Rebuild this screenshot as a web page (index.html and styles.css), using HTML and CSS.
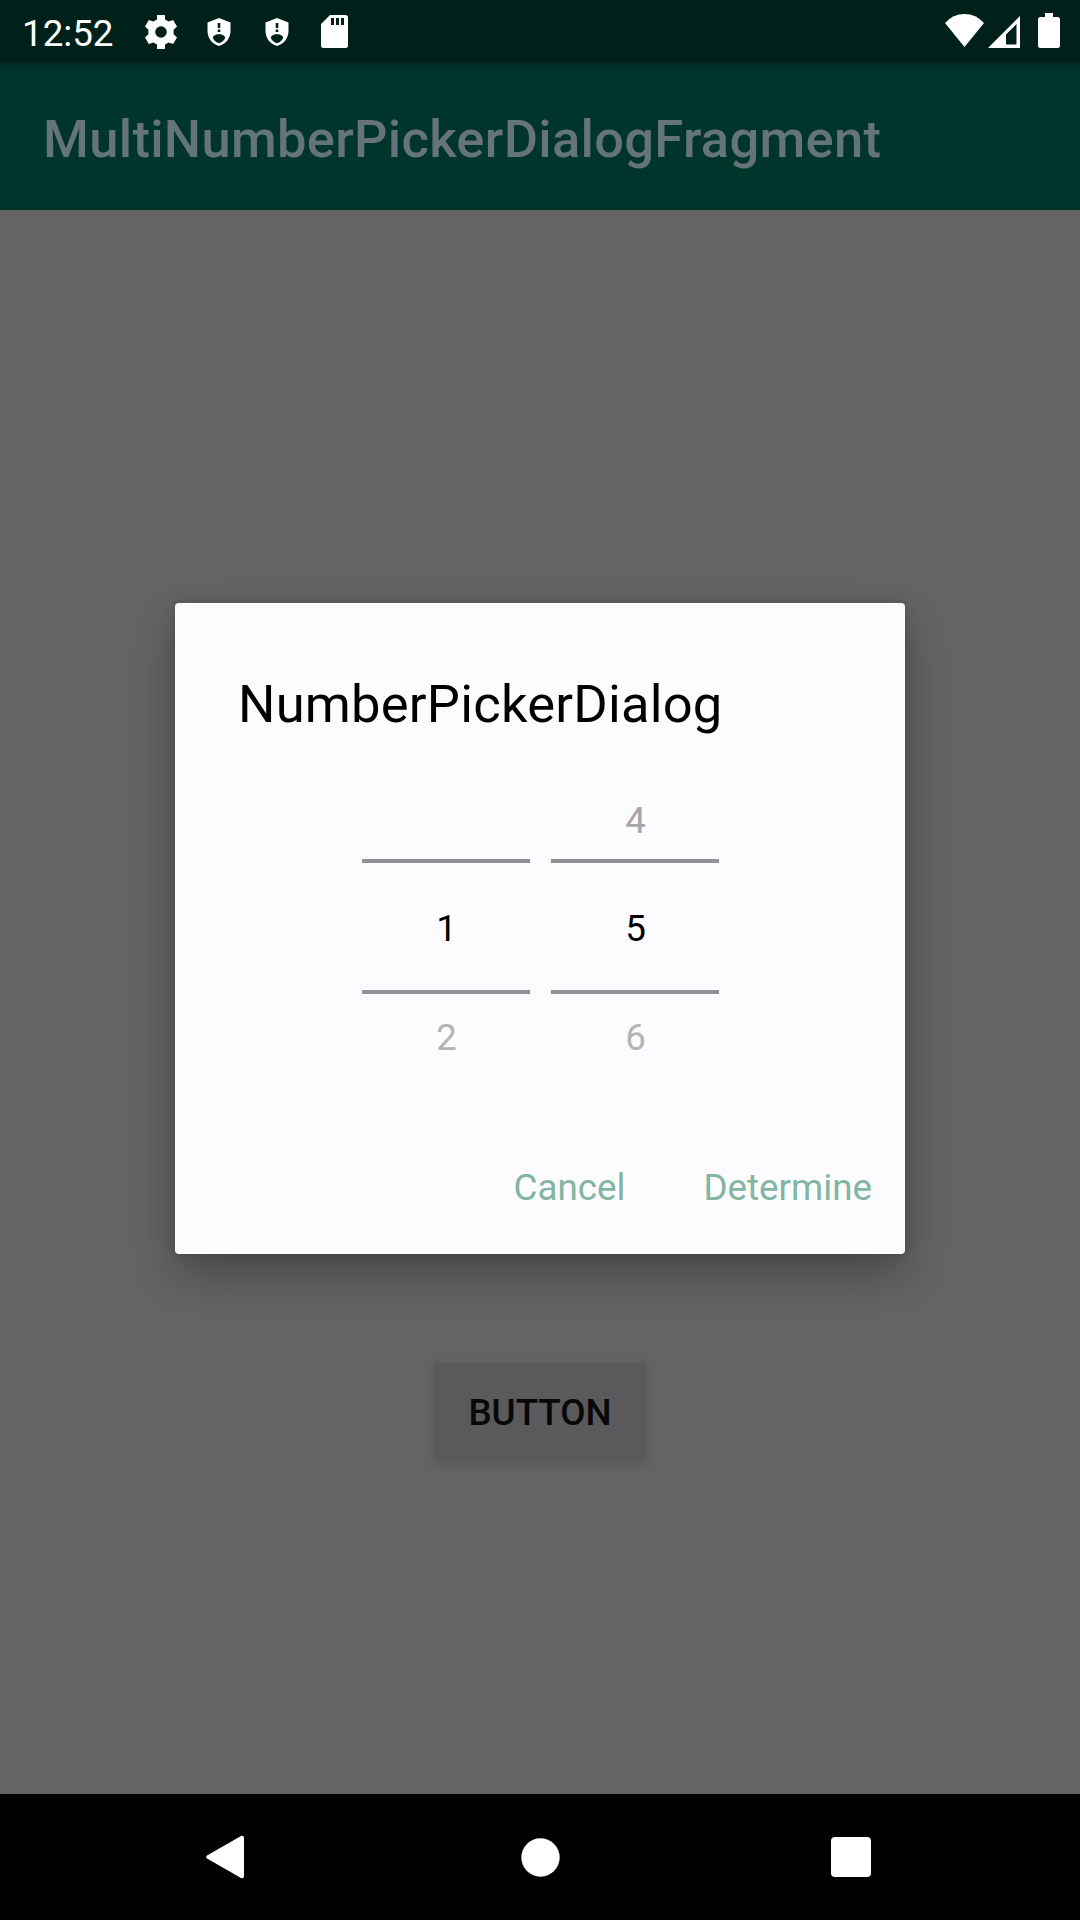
FILE: index.html
```html
<!DOCTYPE html>
<html lang="en">
<head>
<meta charset="utf-8">
<title>MultiNumberPickerDialogFragment</title>
<link rel="stylesheet" href="styles.css">
</head>
<body>
<div class="screen">
  <header class="status-bar">
    <span class="clock">12:52</span>
    <svg class="gear" width="32" height="34" viewBox="0 0 32 34"><path fill-rule="evenodd" d="M12 0h8v4.500l3.500 1.900 4.700-1.300 3.800 6.400-3.400 3.200v4.600l3.400 3.200-3.800 6.400-4.700-1.300-3.500 1.900V34h-8v-4.500l-3.500-1.900-4.700 1.300L0 22.500l3.400-3.200v-4.600L0 11.500l3.800-6.400 4.700 1.300L12 4.500zM16 11.200a5.800 5.800 0 1 0 0 11.600 5.800 5.800 0 0 0 0-11.600z"/></svg>
    <svg class="shield" width="24" height="28" viewBox="0 0 24 28"><path fill-rule="evenodd" d="M12 0l11.500 4.500v8.500c0 7-4.500 13-11.500 15C5 26 .5 20 .5 13V4.500zM10.700 5v5h2.600V5zm0 6.500V14h2.600v-2.500zM12 16.200c-4 0-6.200 2-6.200 3.800 1.500 2.800 3.700 4.600 6.200 5.300 2.500-.7 4.700-2.500 6.200-5.300 0-1.800-2.200-3.800-6.200-3.800z"/></svg>
    <svg class="shield" width="24" height="28" viewBox="0 0 24 28"><path fill-rule="evenodd" d="M12 0l11.500 4.500v8.500c0 7-4.500 13-11.500 15C5 26 .5 20 .5 13V4.500zM10.700 5v5h2.600V5zm0 6.500V14h2.600v-2.500zM12 16.200c-4 0-6.200 2-6.200 3.800 1.500 2.800 3.700 4.600 6.200 5.300 2.500-.7 4.700-2.500 6.200-5.300 0-1.800-2.200-3.800-6.200-3.800z"/></svg>
    <svg class="sd" width="27" height="33" viewBox="0 0 27 33"><path fill-rule="evenodd" d="M9 0h15.500Q27 0 27 2.500v28Q27 33 24.500 33h-22Q0 33 0 30.500V9zM10 3v7h3V3zm5 0v7h3V3zm5 0v7h3V3z"/></svg>
    <svg class="wifi" width="39" height="33" viewBox="0 0 39 33"><path d="M0 9Q8 0 19.500 0T39 9L19.500 33z"/></svg>
    <svg class="signal" width="32" height="32" viewBox="0 0 32 32"><path fill-rule="evenodd" d="M32 0v32H0zM28.500 8L18 18.500V28.500h10.500z"/></svg>
    <svg class="battery" width="22" height="35" viewBox="0 0 22 35"><path d="M7 0h8v4h4.500Q22 4 22 6.500v26Q22 35 19.500 35h-17Q0 35 0 32.500v-26Q0 4 2.500 4H7z"/></svg>
  </header>
  <div class="app-bar"><h1 class="app-title">MultiNumberPickerDialogFragment</h1></div>
  <main class="content">
    <button class="open-button">BUTTON</button>
  </main>
  <nav class="nav-bar">
    <svg class="back" width="38" height="44" viewBox="0 0 38 44"><path d="M1 20.500L35 1Q38 0 38 3v38Q38 44 35 43L1 23.500Q-.5 22 1 20.500z"/></svg>
    <svg class="home" width="39" height="39" viewBox="0 0 39 39"><circle cx="19.500" cy="19.500" r="19.200"/></svg>
    <svg class="recents" width="40" height="40" viewBox="0 0 40 40"><rect width="40" height="40" rx="4"/></svg>
  </nav>
  <section class="dialog" role="dialog">
    <h2 class="dialog-title">NumberPickerDialog</h2>
    <div class="pickers">
      <div class="picker">
        <span class="adjacent"></span>
        <span class="selected">1</span>
        <span class="adjacent next">2</span>
      </div>
      <div class="picker">
        <span class="adjacent previous">4</span>
        <span class="selected">5</span>
        <span class="adjacent next">6</span>
      </div>
    </div>
    <div class="actions">
      <button class="action cancel">Cancel</button>
      <button class="action determine">Determine</button>
    </div>
  </section>
</div>
</body>
</html>
```
FILE: styles.css
```css
* { box-sizing: border-box; }
body { margin: 0; }
h1, h2 { margin: 0; font-weight: 400; }
button { border: 0; padding: 0; background: none; font: inherit; }

.screen {
  position: relative;
  display: flex;
  flex-direction: column;
  width: 1080px;
  height: 1920px;
  overflow: hidden;
  background: #646464;
  font-family: Roboto, sans-serif;
  font-size: 36.75px;
}

.status-bar {
  display: flex;
  align-items: center;
  height: 63px;
  padding: 0 20px 0 22px;
  background: #00201a;
  color: #fff;
}
.status-bar svg { flex: none; fill: #fff; }
.clock { width: 123px; line-height: 63px; padding-top: 3px; }
.shield { margin-left: 30px; }
.shield + .shield { margin-left: 34px; }
.sd { margin-left: 32px; }
.wifi { margin-left: auto; margin-bottom: 3px; }
.signal { margin-left: 4px; }
.battery { margin-left: 18px; margin-bottom: 2px; }

.app-bar {
  display: flex;
  align-items: center;
  height: 147px;
  padding: 4px 43px 0;
  background: linear-gradient(#002a22, #00352b 10px);
}
.app-title {
  color: #65737a;
  font-size: 52.5px;
  font-weight: 500;
  letter-spacing: 0.3px;
}

.content {
  flex: 1;
  display: flex;
  justify-content: center;
  align-items: flex-start;
  padding-top: 1153px;
}
.open-button {
  width: 212px;
  height: 98px;
  padding-top: 1px;
  border-radius: 4px;
  background: #5a595b;
  box-shadow: 0 3px 8px 2px #55555599;
  color: #080808;
  font-weight: 500;
}

.nav-bar {
  display: flex;
  align-items: center;
  justify-content: space-between;
  height: 126px;
  padding: 0 209px 0 206px;
  background: #000;
}
.nav-bar svg { fill: #fff; }
.home { margin-left: 5px; }

.dialog {
  position: absolute;
  left: 175px;
  top: 603px;
  width: 730px;
  height: 651px;
  border-radius: 4px;
  background: #fcfcfe;
  box-shadow: 0 20px 44px 0 #00000048, 0 0 14px #00000020;
}
.dialog-title {
  padding: 70px 63px 0;
  color: #000;
  font-size: 52.5px;
  letter-spacing: 0.22px;
  line-height: 62px;
}
.pickers {
  display: flex;
  justify-content: center;
  gap: 21px;
  padding-top: 57px;
}
.picker {
  width: 168px;
  text-align: center;
}
.picker span { display: block; padding-left: 2px; }
.adjacent { height: 67px; color: #b4b4b6; line-height: 57px; }
.previous { color: #a5a5a5; }
.picker .next { line-height: 88px; }
.selected {
  height: 135px;
  border-top: 4px solid #918f98;
  border-bottom: 4px solid #918f98;
  color: #000;
  line-height: 132px;
}
.actions {
  display: flex;
  justify-content: flex-end;
  gap: 78px;
  padding: 104px 33px 0 0;
}
.action {
  color: #82b5a2;
  line-height: 46px;
}
```
